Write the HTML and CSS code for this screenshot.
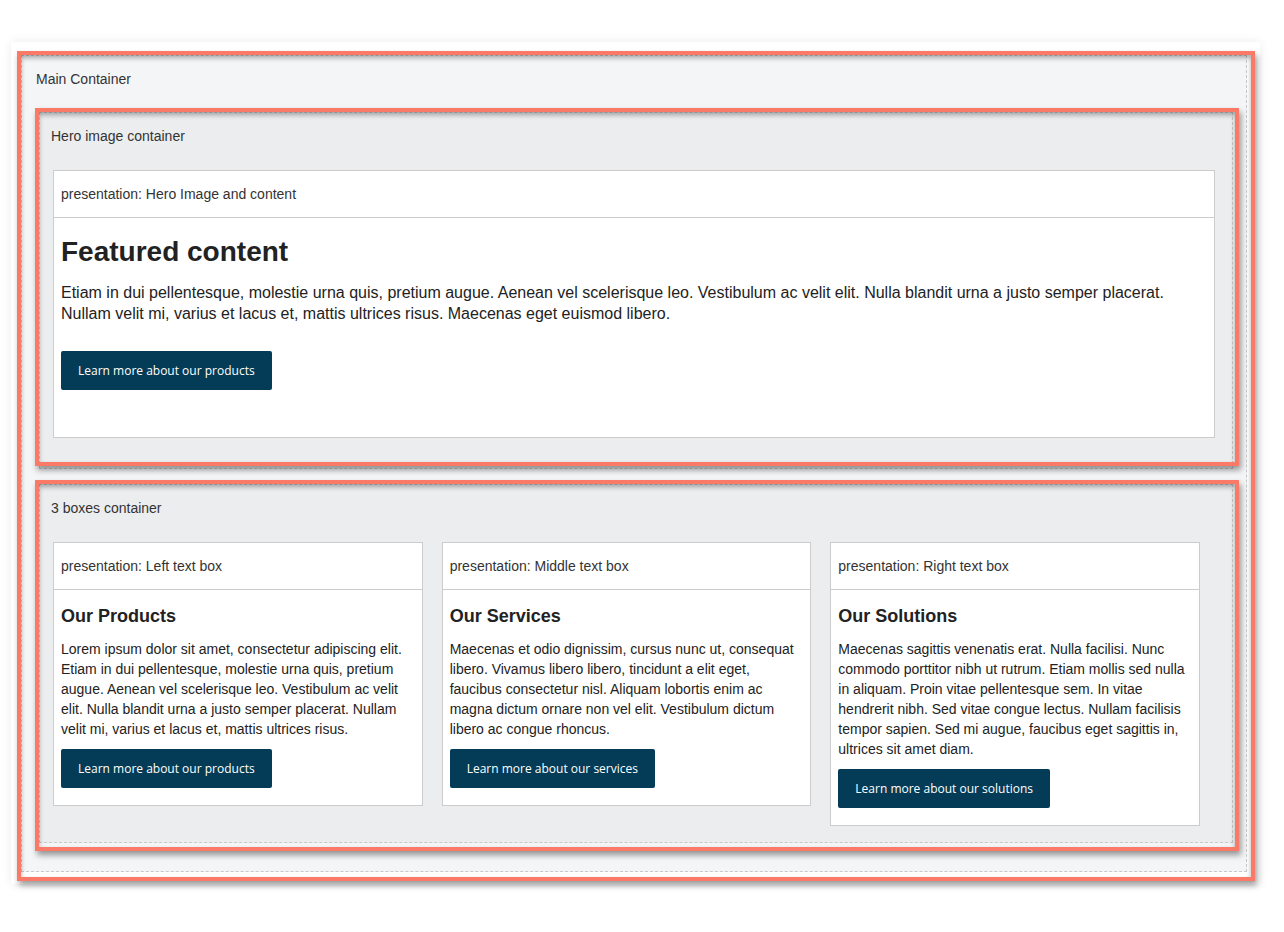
FILE: index.html
```html
<!DOCTYPE html>
<html lang="en">
<head>
<meta charset="utf-8">
<title>Layout</title>
<link rel="stylesheet" href="styles.css">
</head>
<body>
<div class="page">
  <div class="card">
    <div class="region main">
      <div class="hl hl-main"></div>
      <div class="label label-main">Main Container</div>

      <div class="region hero">
        <div class="hl hl-hero"></div>
        <div class="label label-inner">Hero image container</div>
        <div class="pbox">
          <div class="pbox-head">presentation: Hero Image and content</div>
          <div class="hero-body">
            <h2 class="hero-title">Featured content</h2>
            <p class="hero-text">Etiam in dui pellentesque, molestie urna quis, pretium augue. Aenean vel scelerisque leo. Vestibulum ac velit elit. Nulla blandit urna a justo semper placerat. Nullam velit mi, varius et lacus et, mattis ultrices risus. Maecenas eget euismod libero.</p>
            <a class="btn">Learn more about our products</a>
          </div>
        </div>
      </div>

      <div class="region boxes">
        <div class="hl hl-boxes"></div>
        <div class="label label-inner">3 boxes container</div>
        <div class="box-grid">
          <div class="pbox">
            <div class="pbox-head">presentation: Left text box</div>
            <div class="box-body">
              <h3 class="box-title">Our Products</h3>
              <p class="box-text">Lorem ipsum dolor sit amet, consectetur adipiscing elit. Etiam in dui pellentesque, molestie urna quis, pretium augue. Aenean vel scelerisque leo. Vestibulum ac velit elit. Nulla blandit urna a justo semper placerat. Nullam velit mi, varius et lacus et, mattis ultrices risus.</p>
              <a class="btn">Learn more about our products</a>
            </div>
          </div>
          <div class="pbox">
            <div class="pbox-head">presentation: Middle text box</div>
            <div class="box-body">
              <h3 class="box-title">Our Services</h3>
              <p class="box-text">Maecenas et odio dignissim, cursus nunc ut, consequat libero. Vivamus libero libero, tincidunt a elit eget, faucibus consectetur nisl. Aliquam lobortis enim ac magna dictum ornare non vel elit. Vestibulum dictum libero ac congue rhoncus.</p>
              <a class="btn">Learn more about our services</a>
            </div>
          </div>
          <div class="pbox">
            <div class="pbox-head">presentation: Right text box</div>
            <div class="box-body">
              <h3 class="box-title">Our Solutions</h3>
              <p class="box-text">Maecenas sagittis venenatis erat. Nulla facilisi. Nunc commodo porttitor nibh ut rutrum. Etiam mollis sed nulla in aliquam. Proin vitae pellentesque sem. In vitae hendrerit nibh. Sed vitae congue lectus. Nullam facilisis tempor sapien. Sed mi augue, faucibus eget sagittis in, ultrices sit amet diam.</p>
              <a class="btn">Learn more about our solutions</a>
            </div>
          </div>
        </div>
      </div>
    </div>
  </div>
</div>
</body>
</html>
```

FILE: styles.css
```css
* { box-sizing: border-box; }

html, body {
  margin: 0;
  padding: 0;
  background: #ffffff;
}

body {
  font-family: "Liberation Sans", Arial, sans-serif;
  color: #222;
  font-size: 14px;
}

.page {
  padding: 42px 24px 48px 11px;
}

.card {
  background: #ffffff;
  box-shadow: 0 0 10px rgba(0, 0, 0, 0.08);
  padding: 13px 13px 12px 10px;
}

.region {
  position: relative;
  border: 1px dashed #c8c8c8;
}

.main {
  background: #f4f5f7;
  padding: 13px 13px 28px 17px;
}

.hero {
  background: #ecedef;
  padding: 13px 17px 30px 13px;
}

.boxes {
  background: #ecedef;
  margin-top: 15px;
  padding: 13px 32px 16px 13px;
}

.label {
  font-size: 14px;
  line-height: 20px;
  color: #333;
}

.label-main {
  margin-left: -3px;
  margin-bottom: 23px;
}

.label-inner {
  margin-left: -2px;
  margin-bottom: 24px;
}

/* coral highlight overlays */
.hl {
  position: absolute;
  border: 4px solid #fb7a67;
  pointer-events: none;
  z-index: 2;
  box-shadow: 2px 4px 6px rgba(0, 0, 0, 0.4), inset 0 3px 5px rgba(0, 0, 0, 0.32);
}

.hl-main { left: -5px; top: -5px; right: -9px; bottom: -10px; }
.hl-hero { left: -5px; top: -5px; right: -7px; bottom: 2px; }
.hl-boxes { left: -5px; top: -5px; right: -7px; bottom: -9px; }

.pbox {
  background: #ffffff;
  border: 1px solid #cccccc;
}

.pbox-head {
  height: 47px;
  line-height: 46px;
  padding: 0 7px;
  border-bottom: 1px solid #cccccc;
  font-size: 14px;
  color: #333;
}

.hero-body {
  padding: 0 7px 47px;
}

.hero-title {
  margin: 18px 0 14px;
  font-size: 28px;
  line-height: 32px;
  font-weight: bold;
  color: #222;
}

.hero-text {
  margin: 0 0 27px;
  font-size: 16px;
  line-height: 21px;
  color: #222;
}

.btn {
  display: inline-block;
  height: 39px;
  line-height: 39px;
  padding: 0 17px;
  background: #043c57;
  color: #ffffff;
  border-radius: 2px;
  font-family: "Open Sans", "Noto Sans", sans-serif;
  font-size: 12px;
  text-decoration: none;
  vertical-align: top;
}

.box-grid {
  display: grid;
  grid-template-columns: 1fr 1fr 1fr;
  column-gap: 19px;
  align-items: start;
}

.box-body {
  padding: 0 7px 17px;
}

.box-title {
  margin: 15px 0 12px;
  font-size: 18px;
  line-height: 22px;
  font-weight: bold;
  color: #222;
}

.box-text {
  margin: 0 0 10px;
  font-size: 14px;
  line-height: 20px;
  color: #222;
}
```
